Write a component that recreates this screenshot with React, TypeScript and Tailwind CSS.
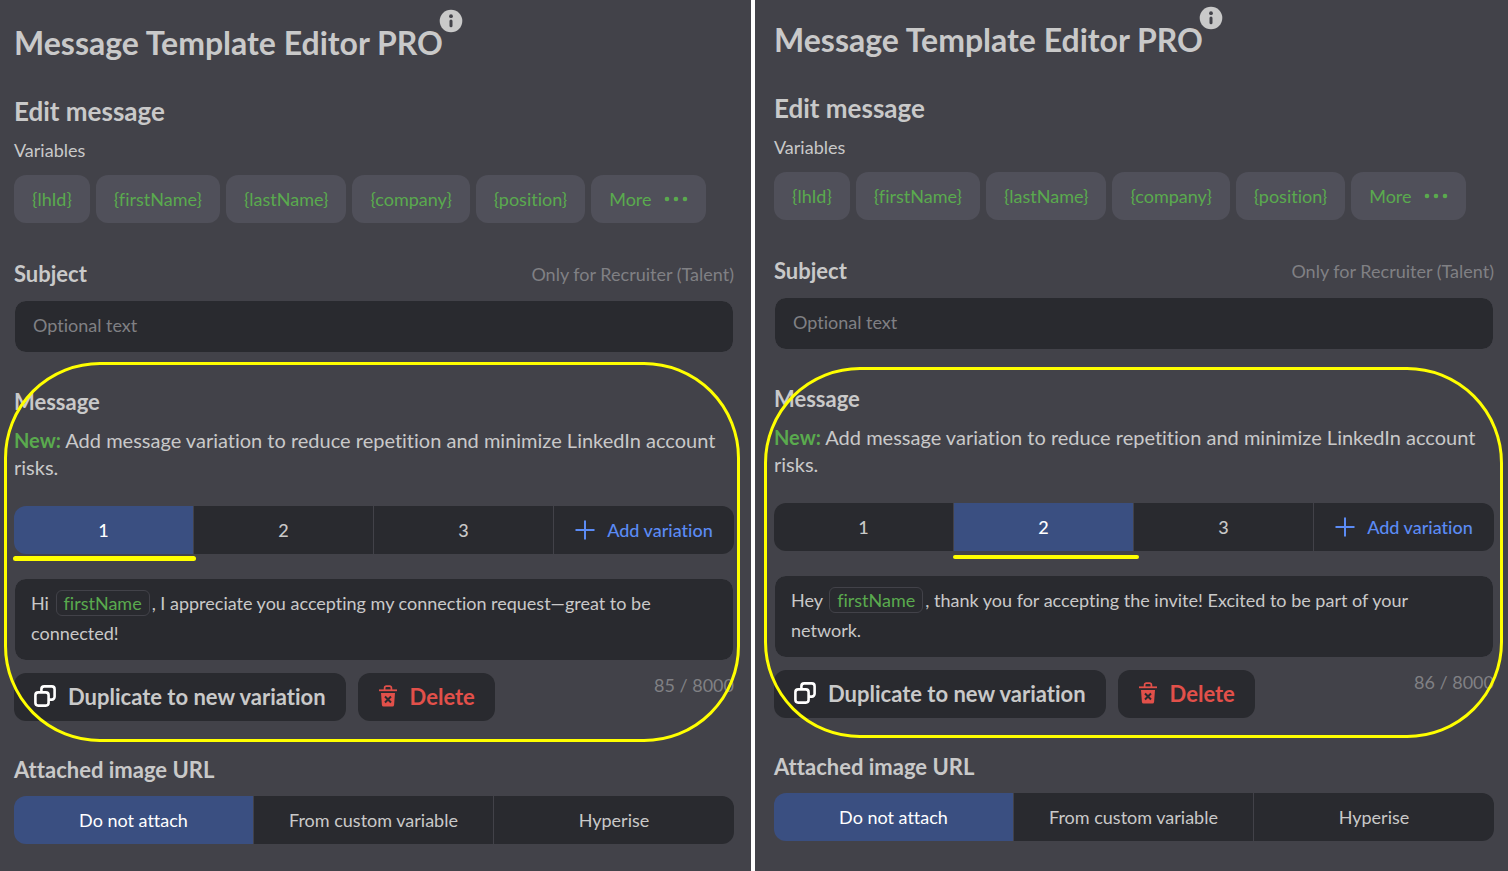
import React, { useState } from 'react';
import clsx from 'clsx';

interface PanelProps {
  id: string;
  initialTab: number;
  greeting: string;
  message: string;
  length: number;
  className: string;
  outlineClass: string;
  underlineClass: string;
}

const VARIABLES = ['{lhId}', '{firstName}', '{lastName}', '{company}', '{position}'];
const ATTACH_OPTIONS = ['Do not attach', 'From custom variable', 'Hyperise'];

const InfoIcon: React.FC = () => (
  <svg viewBox="0 0 24 24" className="w-6 h-6" aria-hidden="true">
    <circle cx="12" cy="12" r="11.3" fill="#c9c9c9" />
    <circle cx="12" cy="7.2" r="1.9" fill="#424249" />
    <rect x="10.5" y="10.4" width="3" height="7.8" rx="1.5" fill="#424249" />
  </svg>
);

const PlusIcon: React.FC = () => (
  <svg viewBox="0 0 20 20" className="w-5 h-5 shrink-0" aria-hidden="true">
    <path d="M10 .5v19M.5 10h19" stroke="currentColor" strokeWidth="2" fill="none" />
  </svg>
);

const DotsIcon: React.FC = () => (
  <svg viewBox="0 0 24 6" className="w-6 h-[6px]" fill="currentColor" aria-hidden="true">
    <circle cx="3" cy="3" r="2.3" />
    <circle cx="12" cy="3" r="2.3" />
    <circle cx="21" cy="3" r="2.3" />
  </svg>
);

const CopyIcon: React.FC = () => (
  <svg viewBox="0 0 22 22" className="w-[22px] h-[22px] shrink-0" fill="none" stroke="#fff" strokeWidth="2.6" aria-hidden="true">
    <rect x="1.4" y="7.4" width="13.2" height="13.2" rx="2.8" />
    <path d="M7.4 7.4V4.2a2.8 2.8 0 0 1 2.8-2.8h7.6a2.8 2.8 0 0 1 2.8 2.8v7.6a2.8 2.8 0 0 1-2.8 2.8h-3.2" />
  </svg>
);

const TrashIcon: React.FC = () => (
  <svg viewBox="0 0 20 22" className="w-5 h-[22px] shrink-0" aria-hidden="true">
    <path d="M6.6 5V2.9a1.7 1.7 0 0 1 1.7-1.7h3.4a1.7 1.7 0 0 1 1.7 1.7V5" fill="none" stroke="currentColor" strokeWidth="1.7" />
    <path d="M1 4.4h18v1.8H1z" fill="currentColor" />
    <path d="M3 8h14l-.9 12a1.7 1.7 0 0 1-1.7 1.5H5.6A1.7 1.7 0 0 1 3.9 20z" fill="currentColor" />
    <path d="M7 11.5l6 6M13 11.5l-6 6" stroke="#292a2f" strokeWidth="2" />
  </svg>
);

const Panel: React.FC<PanelProps> = ({
  id,
  initialTab,
  greeting,
  message,
  length,
  className,
  outlineClass,
  underlineClass,
}) => {
  const [activeTab, setActiveTab] = useState(initialTab);
  const [attach, setAttach] = useState(ATTACH_OPTIONS[0]);

  return (
    <section className={clsx('min-w-0 bg-[#424249] text-[#c9c9c9]', className)}>
      <h1 className="flex text-[32px] leading-9 font-bold">
        Message Template Editor PRO
        <button type="button" aria-label="About the editor" className="relative bottom-4 -ml-1 h-6">
          <InfoIcon />
        </button>
      </h1>

      <h2 className="mt-[34px] text-[26px] leading-8 font-bold">Edit message</h2>
      <p className="mt-[11px] text-lg leading-6">Variables</p>
      <div className="mt-[13px] flex flex-wrap gap-[6px] text-[#5aaa4e] text-lg">
        {VARIABLES.map((name) => (
          <button key={name} type="button" className="h-12 px-[18px] pb-px rounded-xl bg-[#50505a]">
            {name}
          </button>
        ))}
        <button type="button" className="h-12 px-[18px] pb-px rounded-xl bg-[#50505a] flex items-center gap-3">
          More
          <DotsIcon />
        </button>
      </div>

      <div className="mt-[37px] flex justify-between items-center leading-7">
        <label htmlFor={`${id}-subject`} className="text-[22px] leading-7 font-bold">Subject</label>
        <span className="text-lg leading-7 text-[#808084]">Only for Recruiter (Talent)</span>
      </div>
      <input
        id={`${id}-subject`}
        type="text"
        placeholder="Optional text"
        className="block mt-3 w-full h-[53px] px-[18px] pb-[3px] rounded-xl border border-[#424249] bg-[#292a2f] bg-clip-padding text-lg placeholder:text-[#808084]"
      />

      {/* Message variations */}
      <div className="relative mt-[35px]">
        <h3 className="text-[22px] leading-7 font-bold">Message</h3>
        <p className="mt-[11px] text-xl leading-[27px]">
          <strong className="text-[#5aaa4e]">New:</strong> Add message variation to reduce repetition and minimize LinkedIn account risks.
        </p>

        <div className="mt-[25px] flex h-12 text-lg font-medium">
          {[1, 2, 3].map((tab) => (
            <button
              key={tab}
              type="button"
              aria-pressed={tab === activeTab}
              onClick={() => setActiveTab(tab)}
              className={clsx(
                'relative w-1/4 pb-px border-r border-[#424249] first:rounded-l-xl',
                tab === activeTab ? 'bg-[#3a4f81] text-white' : 'bg-[#292a2f]'
              )}
            >
              {tab}
              {tab === activeTab && <span className={clsx('absolute rounded-full bg-[#ffff00]', underlineClass)} />}
            </button>
          ))}
          <button type="button" className="w-1/4 pb-px flex items-center justify-center gap-3 rounded-r-xl bg-[#292a2f] text-[#5b8bf5] whitespace-nowrap">
            <PlusIcon />
            Add variation
          </button>
        </div>

        <div
          role="textbox"
          aria-label="Message text"
          aria-multiline="true"
          contentEditable
          suppressContentEditableWarning
          className="mt-6 pt-[9px] pb-3 px-4 rounded-xl border border-[#424249] bg-[#292a2f] bg-clip-padding text-lg leading-[30px]"
        >
          <span>{greeting} </span>
          <span className="inline-block mx-[2px] px-[7px] rounded-md border border-[#424249] leading-6 text-[#5aaa4e]">firstName</span>
          <span>{message}</span>
        </div>

        <div className="mt-3 flex gap-3 text-[22px] font-bold">
          <button type="button" className="h-12 px-5 pb-[2px] flex items-center gap-3 rounded-xl bg-[#292a2f]">
            <CopyIcon />
            Duplicate to new variation
          </button>
          <button type="button" className="h-12 px-5 pb-[2px] flex items-center gap-3 rounded-xl bg-[#292a2f] text-[#e2504a]">
            <TrashIcon />
            Delete
          </button>
          <span className="ml-auto text-lg leading-6 font-normal text-[#808084]">{length} / 8000</span>
        </div>

        <div className={clsx('absolute border-3 border-[#ffff00] rounded-[96px] pointer-events-none', outlineClass)} />
      </div>

      <h3 className="mt-[35px] text-[22px] leading-7 font-bold">Attached image URL</h3>
      <div className="mt-3 flex h-12 text-lg">
        {ATTACH_OPTIONS.map((option) => (
          <button
            key={option}
            type="button"
            aria-pressed={option === attach}
            onClick={() => setAttach(option)}
            className={clsx(
              'w-1/3 pb-px border-r border-[#424249] first:rounded-l-xl last:rounded-r-xl last:border-r-0',
              option === attach ? 'bg-[#3a4f81] text-white' : 'bg-[#292a2f]'
            )}
          >
            {option}
          </button>
        ))}
      </div>
    </section>
  );
};

export default function App() {
  return (
    <main className="min-h-screen grid grid-cols-[751fr_757fr] font-[Lato,sans-serif] [font-variant-ligatures:none]">
      <Panel
        id="first"
        initialTab={1}
        greeting="Hi"
        message=", I appreciate you accepting my connection request—great to be connected!"
        length={85}
        className="pt-[25px] pb-[27px] pl-[14px] pr-[17px]"
        outlineClass="-top-[26px] -bottom-[21px] -left-[10px] -right-[6px]"
        underlineClass="-left-px -right-[3px] -bottom-[7px] h-[5px]"
      />
      <Panel
        id="second"
        initialTab={2}
        greeting="Hey"
        message=", thank you for accepting the invite! Excited to be part of your network."
        length={86}
        className="pt-[22px] pb-[27px] pl-[19px] pr-[14px] border-l-4 border-white"
        outlineClass="-top-[18px] -bottom-5 -left-[10px] -right-[9px]"
        underlineClass="-left-px -right-[6px] -bottom-2 h-1"
      />
    </main>
  );
}
